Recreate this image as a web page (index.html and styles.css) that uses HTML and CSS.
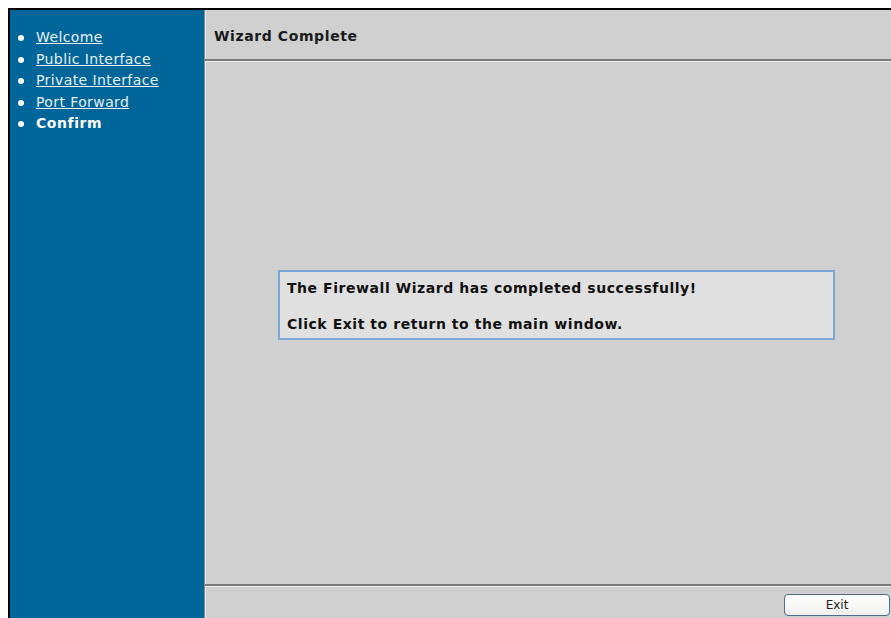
FILE: index.html
```html
<!DOCTYPE html>
<html>
<head>
<meta charset="utf-8">
<title>Firewall Wizard</title>
<link rel="stylesheet" href="styles.css">
</head>
<body>
<div class="frame">
  <nav class="sidebar">
    <ul class="steps">
      <li><a href="#">Welcome</a></li>
      <li><a href="#">Public Interface</a></li>
      <li><a href="#">Private Interface</a></li>
      <li><a href="#">Port Forward</a></li>
      <li class="current">Confirm</li>
    </ul>
  </nav>
  <main class="main">
    <header class="title-bar">Wizard Complete</header>
    <section class="content">
      <div class="message">
        <p>The Firewall Wizard has completed successfully!</p>
        <p>Click Exit to return to the main window.</p>
      </div>
    </section>
    <footer class="actions">
      <button class="btn" type="button">Exit</button>
    </footer>
  </main>
</div>
</body>
</html>
```
FILE: styles.css
```css
html, body {
  height: 100%;
}

body {
  margin: 8px 0 0 8px;
  background: #ffffff;
  overflow: hidden;
  font-family: "DejaVu Sans", Verdana, sans-serif;
  font-size: 14px;
}

.frame {
  display: grid;
  grid-template-columns: 194px 1fr;
  height: calc(100vh - 8px);
  border-top: 2px solid #000000;
  border-left: 2px solid #000000;
  box-sizing: border-box;
}

.sidebar {
  background: #006699;
}

.steps {
  margin: 0;
  padding: 17px 0 0 26px;
  list-style: none;
}

.steps li {
  position: relative;
  line-height: 21.5px;
  letter-spacing: 0.4px;
  color: #ffffff;
}

.steps li::before {
  content: "";
  position: absolute;
  left: -18px;
  top: 8px;
  width: 6px;
  height: 6px;
  border-radius: 50%;
  background: #ffffff;
}

.steps a {
  color: #e6eef5;
  text-decoration: underline;
}

.steps .current {
  font-weight: bold;
  letter-spacing: 0.55px;
}

.main {
  display: flex;
  flex-direction: column;
  background: #d0d0d0;
  border-left: 1px solid #8a8a8a;
  box-shadow: inset 1px 0 0 #e8e8e8;
}

.title-bar {
  height: 51px;
  box-sizing: border-box;
  padding: 18px 0 0 9px;
  font-weight: bold;
  letter-spacing: 0.6px;
  color: #1a1a1a;
  border-bottom: 2px solid #7a7a7a;
  box-shadow: 0 1px 0 #ececec;
}

.content {
  flex: 1;
  padding: 209px 56px 0 73px;
}

.message {
  background: #e0e0e0;
  border: 2px solid #7aa6d8;
  padding: 7px 7px 5px;
  font-weight: bold;
  letter-spacing: 0.55px;
  color: #111111;
}

.message p {
  margin: 0;
  line-height: 18px;
}

.message p + p {
  margin-top: 18px;
}

.actions {
  display: flex;
  justify-content: flex-end;
  height: 34px;
  box-sizing: border-box;
  padding: 8px 1px 0 0;
  border-top: 2px solid #7a7a7a;
  box-shadow: inset 0 1px 0 #ececec;
}

.btn {
  width: 106px;
  height: 22px;
  border: 1px solid #4f6d8a;
  border-radius: 4px;
  background: linear-gradient(#ffffff, #f0f0ee);
  font-family: "DejaVu Sans", Verdana, sans-serif;
  font-size: 12px;
  color: #222222;
  padding: 0;
}
```
